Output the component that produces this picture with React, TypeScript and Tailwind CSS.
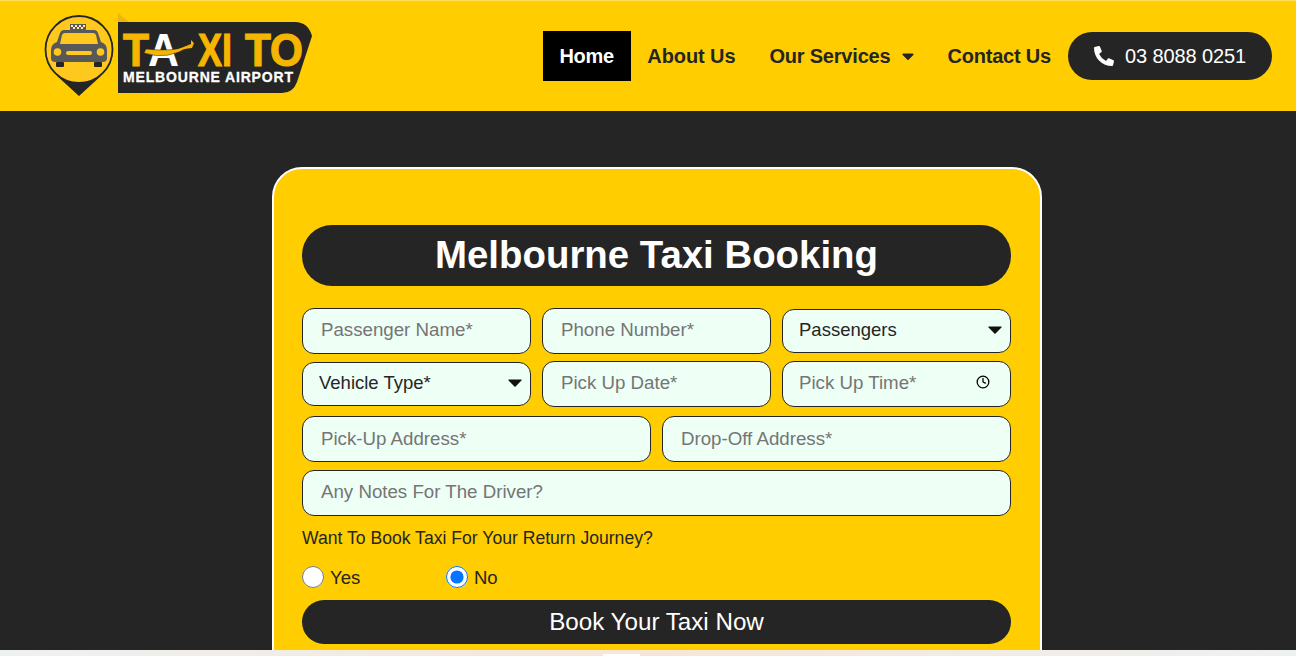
import { Clock } from 'lucide-react';
import { FaCaretDown, FaPhoneAlt } from 'react-icons/fa';

const inputClass =
  'w-full rounded-[12px] border border-[#252525] bg-[#eefff6] pr-[18px] text-[18.7px] text-[#252525] outline-none placeholder:text-[#757575]';
const selectClass =
  'block h-[44px] w-full appearance-none rounded-[12px] border border-[#252525] bg-[#eefff6] pb-[1px] pl-[16px] text-[18.5px] text-[#252525] outline-none';

// the logo is an image in the original, redrawn here
function Logo() {
  return (
    <svg width="280" height="96" viewBox="40 8 280 96" className="shrink-0">
      {/* pin */}
      <circle cx="79" cy="49.5" r="33.5" fill="#ffc81c" stroke="#252525" strokeWidth="1.8" />
      <path d="M56 75 L79 96 L102 75 Q79 90 56 75 Z" fill="#252525" />
      {/* taxi sign */}
      <rect x="70" y="24" width="16" height="6" fill="#58585a" />
      <path d="M71 25h2v2h-2zM75 25h2v2h-2zM79 25h2v2h-2zM83 25h2v2h-2zM73 27h2v2h-2zM77 27h2v2h-2zM81 27h2v2h-2z" fill="#ffe9a0" />
      {/* car */}
      <path
        d="M64 30 H94 Q97 30 98 33 L101 42 Q107 44 107 50 V58 Q107 62 103 62 H55 Q51 62 51 58 V50 Q51 44 57 42 L60 33 Q61 30 64 30 Z"
        fill="#58585a"
      />
      <path d="M65 33 H93 Q95 33 96 35 L98 44 H60 L62 35 Q63 33 65 33 Z" fill="#ffc81c" />
      <circle cx="57.5" cy="52" r="3.8" fill="#ffc81c" />
      <circle cx="100.5" cy="52" r="3.8" fill="#ffc81c" />
      <rect x="66" y="51" width="26" height="4" rx="2" fill="#ffc81c" />
      <rect x="56" y="62" width="8" height="5" rx="1" fill="#252525" />
      <rect x="94" y="62" width="8" height="5" rx="1" fill="#252525" />
      {/* banner */}
      <path d="M118 13 L129 22 H118 Z" fill="#eeb60c" />
      <path d="M118 22 H295 Q308 22 312 36 L297 82 Q293 93 282 93 H118 Z" fill="#252525" />
      <g fontFamily="'Liberation Sans', Arial, sans-serif" fontWeight="700">
        <g fill="#f6b500" stroke="#f6b500" strokeWidth="1.2">
          <text x="123" y="66" fontSize="46" textLength="26" lengthAdjust="spacingAndGlyphs">T</text>
          <text x="198" y="66" fontSize="46" textLength="34" lengthAdjust="spacingAndGlyphs">XI</text>
          <text x="245" y="66" fontSize="46" textLength="58" lengthAdjust="spacingAndGlyphs">TO</text>
        </g>
        <text x="148" y="66" fontSize="46" fill="#ffffff" textLength="31" lengthAdjust="spacingAndGlyphs">A</text>
        <text x="123" y="81.5" fontSize="14" fill="#ffffff" stroke="#ffffff" strokeWidth="0.3" textLength="170" lengthAdjust="spacing">MELBOURNE AIRPORT</text>
      </g>
      {/* swoosh and plane */}
      <path d="M144 53 Q168 61 190 46 Q172 52 146 49 Z" fill="#f6b500" stroke="#252525" strokeWidth="0.5" />
      <path d="M176 50 L191 44 L191 40 L194 43 L192 48 Z" fill="#f6b500" />
    </svg>
  );
}

function SelectField({ label }: { label: string }) {
  return (
    <div className="relative">
      <select className={selectClass} defaultValue="">
        <option value="">{label}</option>
      </select>
      <svg width="14" height="8" viewBox="0 0 14 8" className="absolute right-[9px] top-[17px]">
        <path d="M1 0.5 H13 Q14 0.5 13.4 1.4 L7.6 7.4 Q7 8 6.4 7.4 L0.6 1.4 Q0 0.5 1 0.5 Z" fill="#111111" />
      </svg>
    </div>
  );
}

export default function App() {
  return (
    <div className='flex h-[656px] flex-col overflow-hidden font-["Liberation_Sans",Arial,sans-serif]'>
      {/* Header */}
      <header className="flex h-[111px] shrink-0 items-center border-t border-t-[#ffdf55] bg-[#ffcd00] pl-[40px] pr-[24px]">
        <Logo />
        <nav className="ml-auto flex h-[50px] items-center text-[20px] font-bold text-[#252525]">
          <a className="flex h-full items-center bg-black pl-[16.5px] pr-[17px] tracking-[-0.3px] text-white">Home</a>
          <a className="flex h-full items-center pl-[16.5px] pr-[17.5px] tracking-[-0.1px]">About Us</a>
          <a className="flex h-full items-center px-[16.5px] tracking-[-0.2px]">
            Our Services
            <FaCaretDown className="ml-[12px] h-[20px] w-[12px]" />
          </a>
          <a className="flex h-full items-center pl-[16.5px] pr-[17px] tracking-[-0.2px]">Contact Us</a>
          <a className="flex h-[48px] w-[204px] items-center gap-[11px] rounded-[24px] bg-[#252525] pl-[26px] font-normal tracking-[-0.1px] text-white">
            <FaPhoneAlt className="h-[20px] w-[20px]" />
            03 8088 0251
          </a>
        </nav>
      </header>

      {/* Booking */}
      <section className="flex h-[539px] shrink-0 justify-center overflow-hidden bg-[#252525] pt-[56px]">
        <div className="ml-[18px] h-fit w-[770px] rounded-[30px] border-2 border-white bg-[#ffcd00] pb-[40px] pl-[28px] pr-[29px] pt-[56px]">
          <h1 className="flex h-[61px] items-center justify-center rounded-[30px] bg-[#252525] pb-[2px] text-[38.4px] font-bold text-white">
            Melbourne Taxi Booking
          </h1>

          <form className="mt-[22px]">
            <div className="grid grid-cols-3 items-center gap-x-[11px] gap-y-[7.5px]">
              <input className={`${inputClass} h-[45.5px] pb-[2px] pl-[18px]`} placeholder="Passenger Name*" />
              <input className={`${inputClass} h-[45.5px] pb-[2px] pl-[18px]`} placeholder="Phone Number*" />
              <SelectField label="Passengers" />
              <SelectField label="Vehicle Type*" />
              <input className={`${inputClass} h-[45.5px] pb-[1px] pl-[18px]`} placeholder="Pick Up Date*" />
              <div className="relative">
                <input className={`${inputClass} block h-[45.5px] pb-[1px] pl-[16px]`} placeholder="Pick Up Time*" />
                <Clock className="absolute right-[21px] top-[14px] h-[14px] w-[14px] text-black" strokeWidth={2.2} />
              </div>
            </div>

            <div className="mt-[9.5px] grid grid-cols-2 gap-x-[11px]">
              <input className={`${inputClass} h-[46px] pb-[1px] pl-[18px]`} placeholder="Pick-Up Address*" />
              <input className={`${inputClass} h-[46px] pb-[1px] pl-[18px]`} placeholder="Drop-Off Address*" />
            </div>

            <input className={`${inputClass} mt-[8px] block h-[46px] pb-[2px] pl-[18px]`} placeholder="Any Notes For The Driver?" />

            <p className="mt-[11px] text-[17.6px] leading-[22px] text-[#252525]">Want To Book Taxi For Your Return Journey?</p>

            <div className="mt-[16px] flex h-[24px] items-center text-[18.5px] text-[#252525]">
              <label className="flex w-[144px] items-center gap-[6px]">
                <input type="radio" name="return" className="m-0 h-[22px] w-[22px]" />
                <span className="pt-[2px]">Yes</span>
              </label>
              <label className="flex items-center gap-[6px]">
                <input type="radio" name="return" className="m-0 h-[22px] w-[22px]" defaultChecked />
                <span className="pt-[2px]">No</span>
              </label>
            </div>

            <button
              type="button"
              className="mt-[11px] block h-[44px] w-full rounded-[22px] bg-[#252525] text-[24.2px] text-white"
            >
              Book Your Taxi Now
            </button>
          </form>
        </div>
      </section>

      {/* start of the next section */}
      <div className="relative h-[6px] bg-gradient-to-r from-[#eef1f2] via-[#f6e6d8] to-[#eef1f2]">
        <div className="absolute left-[603px] top-[4px] h-[2px] w-[37px] bg-white" />
      </div>
    </div>
  );
}
